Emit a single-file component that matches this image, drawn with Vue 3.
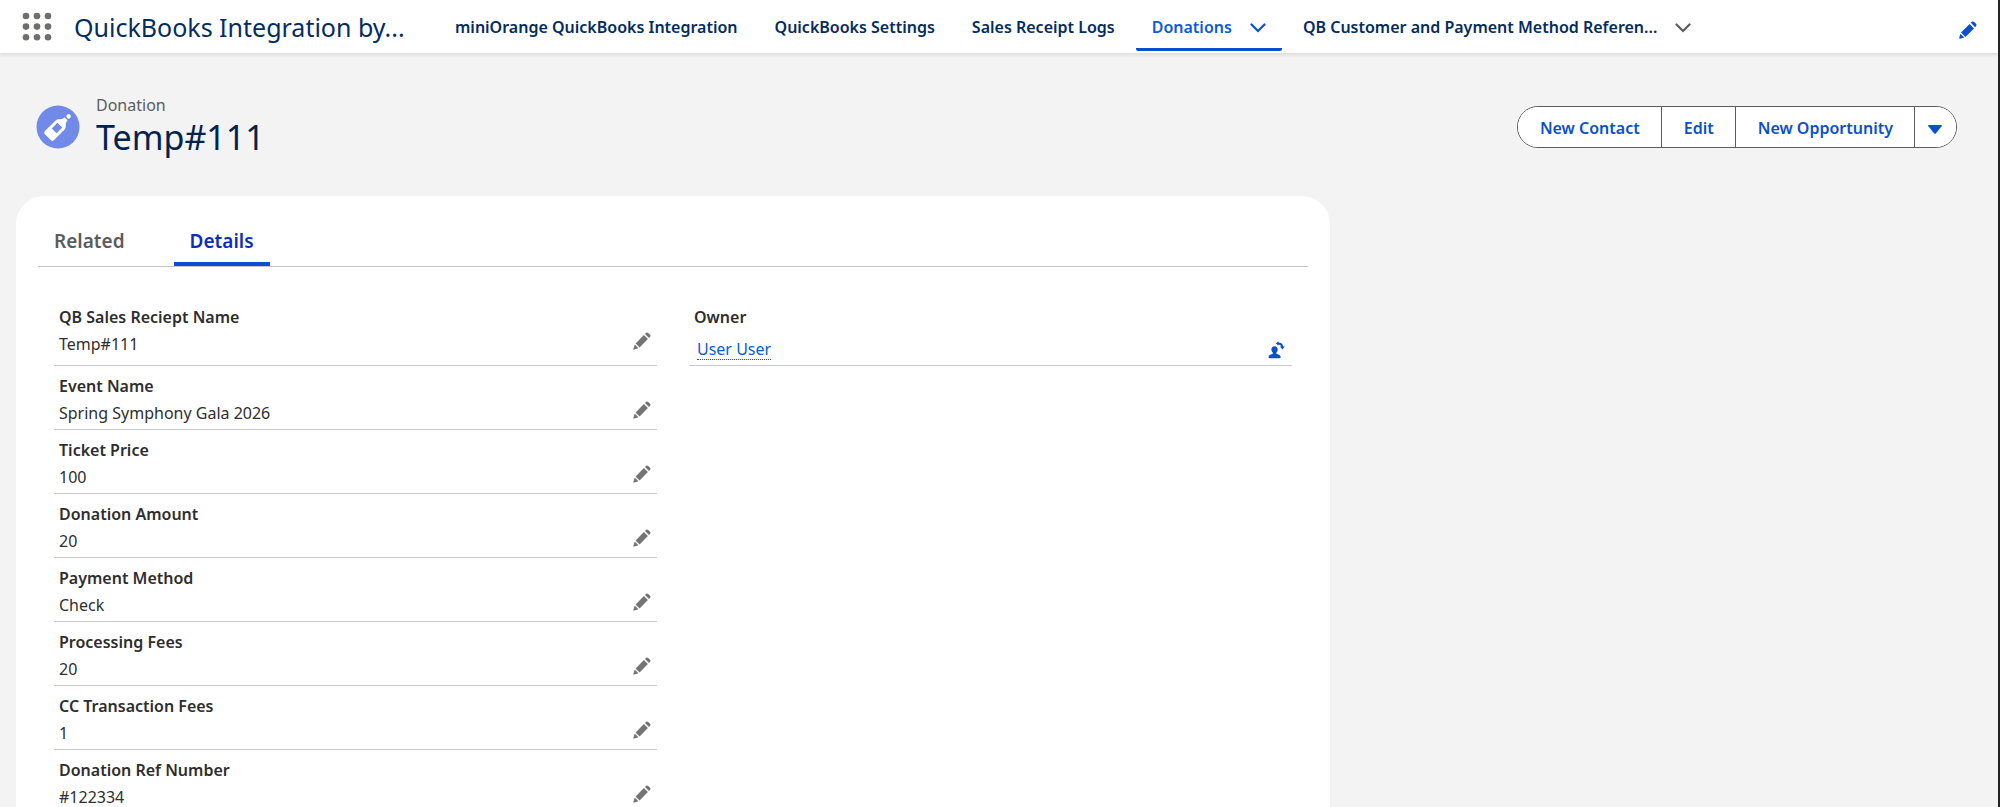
<script setup>
import { ref } from 'vue'

const navItems = [
  { label: 'miniOrange QuickBooks Integration' },
  { label: 'QuickBooks Settings' },
  { label: 'Sales Receipt Logs' },
  { label: 'Donations', active: true, menu: true },
  { label: 'QB Customer and Payment Method Referen...', menu: true }
]

const actions = ['New Contact', 'Edit', 'New Opportunity']

const fields = [
  { label: 'QB Sales Reciept Name', value: 'Temp#111' },
  { label: 'Event Name', value: 'Spring Symphony Gala 2026' },
  { label: 'Ticket Price', value: '100' },
  { label: 'Donation Amount', value: '20' },
  { label: 'Payment Method', value: 'Check' },
  { label: 'Processing Fees', value: '20' },
  { label: 'CC Transaction Fees', value: '1' },
  { label: 'Donation Ref Number', value: '#122334' }
]

const tabs = ['Related', 'Details']
const activeTab = ref('Details')
</script>

<template>
  <div class="page">
    <header class="topbar">
      <button class="icon-button launcher" aria-label="App Launcher">
        <svg width="30" height="30" viewBox="0 0 30 30" fill="#706e6b">
          <template v-for="r in 3" :key="r">
            <circle v-for="c in 3" :key="c" :cx="c * 11 - 7" :cy="r * 10.6 - 6.6" r="3.3" />
          </template>
        </svg>
      </button>
      <span class="app-name">QuickBooks Integration by...</span>
      <nav class="nav">
        <div v-for="item in navItems" :key="item.label" class="nav-item" :class="{ active: item.active }">
          <a href="#" class="nav-link">{{ item.label }}</a>
          <button v-if="item.menu" class="icon-button chevron" :aria-label="item.label + ' list'">
            <svg width="16" height="10" viewBox="0 0 16 10" fill="none" stroke="currentColor" stroke-width="2.2" stroke-linecap="round">
              <path d="M1.5 1.5 8 8 14.5 1.5" />
            </svg>
          </button>
        </div>
      </nav>
      <button class="icon-button nav-edit" aria-label="Edit navigation">
        <svg width="18" height="18" viewBox="0 0 18 18" fill="currentColor">
          <path d="M2 11.6 10.6 3 15 7.4 6.4 16zM11.8 1.8 13 .6Q14.2 0 15.2 1L17 2.8Q18 3.9 17.2 5L16.2 6.2zM1.4 12.7 5.3 16.6 1 17.8Q0 18 .2 17z" />
        </svg>
      </button>
    </header>

    <section class="record-header">
      <svg class="record-icon" width="44" height="44" viewBox="0 0 44 44">
        <circle cx="22" cy="22" r="21.5" fill="#7189e8" />
        <g transform="rotate(45 22 22)" fill="#fff">
          <path d="M20 10.6H24Q24.2 13.8 26.4 15.4Q28.4 17 28.4 19.4V34.4Q28.4 36.4 26.4 36.4H17.6Q15.6 36.4 15.6 34.4V19.4Q15.6 17 17.6 15.4Q19.8 13.8 20 10.6z" />
          <circle cx="22" cy="7" r="2.2" />
          <rect x="18.6" y="19.4" width="6.8" height="8" fill="#7189e8" />
        </g>
      </svg>
      <div class="record-title">
        <span class="record-type">Donation</span>
        <h1>Temp#111</h1>
      </div>
      <div class="actions">
        <button v-for="a in actions" :key="a">{{ a }}</button>
        <button class="more" aria-label="More actions">
          <svg width="14" height="9" viewBox="0 0 14 9" fill="currentColor">
            <path d="M.6 0H13.4Q14.3.3 13.6 1.2L8 8.3Q7 9.3 6 8.3L.4 1.2Q-.3.3.6 0z" />
          </svg>
        </button>
      </div>
    </section>

    <main class="card">
      <div class="tabs" role="tablist">
        <button
          v-for="tab in tabs"
          :key="tab"
          role="tab"
          class="tab"
          :class="{ selected: tab === activeTab }"
          :aria-selected="tab === activeTab"
          @click="activeTab = tab"
        >{{ tab }}</button>
      </div>
      <div class="columns">
        <dl class="column">
          <div v-for="f in fields" :key="f.label" class="field">
            <dt>{{ f.label }}</dt>
            <dd>
              <span>{{ f.value }}</span>
              <button class="icon-button field-edit" :aria-label="'Edit ' + f.label">
                <svg width="18" height="18" viewBox="0 0 18 18" fill="currentColor">
                  <path d="M2.6 11.4 10.9 3.1 14.9 7.1 6.6 15.4zM12 2 13.2.8Q14.3 0 15.2.9L17.1 2.8Q18 3.7 17.2 4.8L16 6zM1.8 12.5 5.5 16.2 1.2 17.6Q.2 17.8.4 16.8z" />
                </svg>
              </button>
            </dd>
          </div>
        </dl>
        <dl class="column">
          <div class="field">
            <dt>Owner</dt>
            <dd class="owner">
              <a href="#" class="owner-link">User User</a>
              <button class="icon-button owner-edit" aria-label="Change Owner">
                <svg width="18" height="18" viewBox="0 0 18 18" fill="currentColor">
                  <path d="M6.5 5.2C8.4 5.2 9.7 6.6 9.7 8.5C9.7 9.8 9.2 10.7 8.4 11.5V12.7L11.4 14Q12.6 14.6 12.6 16V16.5Q12.6 17.3 11.8 17.3H1.4Q.6 17.3.6 16.5V16Q.6 14.6 1.8 14L4.8 12.7V11.5C4 10.7 3.4 9.8 3.4 8.5C3.4 6.6 4.6 5.2 6.5 5.2z" />
                  <path d="M9.8 2.4Q14 2.4 14.4 6" fill="none" stroke="currentColor" stroke-width="2" />
                  <path d="M10.4.2V4.6L7.8 2.4zM12 5.4H16.8L14.4 8.4z" />
                </svg>
              </button>
            </dd>
          </div>
        </dl>
      </div>
    </main>
  </div>
</template>

<style>
body {
  background: #f3f3f3;
}
</style>

<style scoped>
.page {
  display: flex;
  flex-direction: column;
  height: 100vh;
  overflow: hidden;
  box-sizing: border-box;
  border-right: 2px solid #242424;
  background: #f3f3f3;
  color: #2e2e2e;
  font-family: "Noto Sans", "Open Sans", sans-serif;
  font-size: 16px;
  line-height: 24px;
}
button {
  font: inherit;
  cursor: pointer;
}
.icon-button {
  display: flex;
  padding: 0;
  border: 0;
  background: none;
}
.topbar {
  display: flex;
  flex: none;
  height: 53px;
  padding: 0 21px 0 22px;
  background: #fff;
  box-shadow: 0 2px 3px #dcdcdc;
}
.launcher {
  align-items: center;
}
.app-name {
  margin-left: 22px;
  width: 365px;
  color: #032d60;
  font-size: 25px;
  line-height: 54px;
  white-space: nowrap;
}
.nav {
  display: flex;
  flex: 1;
  gap: 5px;
}
.nav-item {
  display: flex;
  align-items: center;
  gap: 18px;
  height: 51px;
  padding: 0 16px;
  box-sizing: border-box;
  border-bottom: 3px solid transparent;
  border-radius: 2px;
  color: #5c5c5c;
}
.nav-link {
  color: #032d60;
  font-weight: 600;
  line-height: 48px;
  padding-top: 6px;
  text-decoration: none;
  white-space: nowrap;
}
.nav-item.active {
  border-color: #0b4fd0;
  color: #0b4fd0;
}
.active .nav-link {
  color: #0b5cd8;
}
.chevron {
  color: inherit;
  padding-top: 8px;
}
.nav-edit {
  align-items: center;
  padding-top: 6px;
  color: #0b4fd0;
}
.record-header {
  display: flex;
  flex: none;
  align-items: center;
  padding: 40px 41px 35px 36px;
}
.record-icon {
  margin-right: 16px;
}
.record-title {
  flex: 1;
  padding-bottom: 4px;
}
.record-type {
  display: block;
  color: #5c5c5c;
}
h1 {
  margin: 0;
  color: #03234d;
  font-size: 34px;
  font-weight: 400;
  line-height: 40px;
}
.actions {
  display: flex;
  overflow: hidden;
  border: 1px solid #5c5c5c;
  border-radius: 21px;
  background: #fff;
}
.actions button {
  height: 40px;
  padding: 1px 21px 0 22px;
  border: 0;
  border-right: 1px solid #5c5c5c;
  background: #fff;
  color: #0b4fd0;
  font-weight: 600;
}
.actions .more {
  display: flex;
  align-items: center;
  padding: 4px 14px 0 13px;
  border-right: 0;
}
.card {
  flex: 1 0 auto;
  box-sizing: border-box;
  width: calc(66.666% - 18px);
  margin-left: 16px;
  padding: 21px 22px 0;
  border-radius: 28px 28px 0 0;
  background: #fff;
}
.tabs {
  display: flex;
  gap: 33px;
  border-bottom: 1px solid #c4c4c4;
}
.tab {
  height: 49px;
  padding: 3px 16px 0;
  border: 0;
  border-bottom: 4px solid transparent;
  background: none;
  color: #5c5c5c;
  font-size: 19px;
  font-weight: 600;
}
.tab.selected {
  border-color: #0b4fd0;
  color: #0a2fb4;
}
.columns {
  display: grid;
  grid-template-columns: 1fr 1fr;
  gap: 32px;
  padding: 30px 16px 0;
}
.column {
  margin: 0;
}
.field {
  height: 64px;
  padding: 8px 6px 0 5px;
  box-sizing: border-box;
  border-bottom: 1px solid #c9c9c9;
}
.field:first-child {
  height: 69px;
}
.field dt {
  font-weight: 600;
  line-height: 24px;
}
.field dd {
  display: flex;
  justify-content: space-between;
  margin: 0;
  line-height: 30px;
}
.field-edit {
  align-self: flex-start;
  padding-top: 3px;
  color: #747474;
}
.field .owner {
  align-items: center;
  padding: 10px 0 0 3px;
}
.owner-link {
  border-bottom: 1px dotted #0b5cd8;
  color: #0b5cd8;
  line-height: 20px;
  text-decoration: none;
}
.owner-edit {
  color: #0b4fd0;
}
</style>
